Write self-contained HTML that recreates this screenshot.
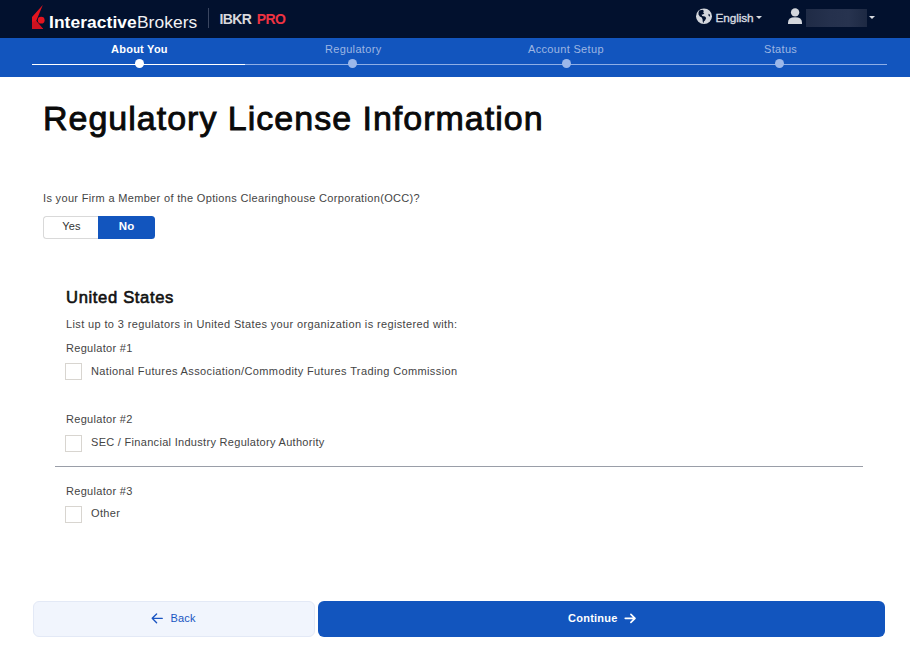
<!DOCTYPE html>
<html><head><meta charset="utf-8">
<style>
*{box-sizing:border-box;margin:0;padding:0}
html,body{width:910px;height:658px;overflow:hidden;background:#fff;font-family:"Liberation Sans",sans-serif;color:#333}
.abs{position:absolute;white-space:nowrap}
#hdr{position:absolute;left:0;top:0;width:910px;height:38px;background:#02112e}
#prog{position:absolute;left:0;top:38px;width:910px;height:39px;background:#1255be}
.t11{font-size:11px;letter-spacing:0.33px;color:#444}
.cb{position:absolute;width:17px;height:17px;border:1px solid #d8d5d0;background:#fff}
</style></head>
<body>
<div id="hdr">
  <svg class="abs" style="left:0;top:0" width="60" height="38" viewBox="0 0 60 38">
    <path d="M42.8 5 L32 17 L32 29 L43.2 29 L36.2 21 Z" fill="#e3141f"/>
    <path d="M32 22 L32 29 L43.2 29 L36.2 21 Z" fill="#cc1220"/>
    <circle cx="41.2" cy="20.2" r="3.4" fill="#e3141f"/>
  </svg>
  <div class="abs" style="left:49px;top:12px;font-size:17.4px;color:#fff;line-height:20px;letter-spacing:0.08px"><b>Interactive</b><span style="color:#f2f2f4">Brokers</span></div>
  <div class="abs" style="left:208px;top:8px;width:1px;height:20px;background:#3a4660"></div>
  <div class="abs" style="left:219.5px;top:11px;font-size:14px;line-height:16px;font-weight:bold;color:#d8d8dc;letter-spacing:-0.6px">IBKR<span style="color:#ee3342;margin-left:5.5px">PRO</span></div>
  <svg class="abs" style="left:692px;top:5px" width="24" height="24" viewBox="0 0 24 24">
    <ellipse cx="12" cy="11.25" rx="8" ry="7.8" fill="#d3d6dc"/>
    <path d="M7.2 5.6 L10.5 4.8 L12 6 L11 7.3 L12.3 8.3 L11 9.6 L9.6 9.4 L10.2 11 L13 11.6 L14.2 13 L13 15.5 L11.8 16.6 L11.5 18.2 L10.8 17 L10.5 14 L9.5 12.3 L7.8 11.5 L6.5 9.5 L6.5 7.5 Z" fill="#02112e"/>
    <path d="M16.4 8.8 L17.6 9.2 L18 10.8 L17.3 11.8 L16.6 10.6 Z" fill="#02112e"/>
  </svg>
  <div class="abs" style="left:715.5px;top:10.5px;font-size:11.8px;line-height:14px;color:#d8dbe0;font-weight:normal;letter-spacing:-0.1px;-webkit-text-stroke:0.35px #d8dbe0">English</div>
  <div class="abs" style="left:756px;top:16px;width:0;height:0;border-left:3px solid transparent;border-right:3px solid transparent;border-top:3px solid #d8dbe0"></div>
  <svg class="abs" style="left:782px;top:4px" width="24" height="24" viewBox="0 0 24 24">
    <circle cx="13.1" cy="8.4" r="4.2" fill="#d3d6dc"/>
    <path d="M6 20 L6 18.5 Q6 13.2 13 13.2 Q20 13.2 20 18.5 L20 20 Z" fill="#d3d6dc"/>
  </svg>
  <div class="abs" style="left:806px;top:9px;width:61px;height:18px;background:linear-gradient(90deg,#1f2b46,#25314d 40%,#27334f 70%,#1d2943)"></div>
  <div class="abs" style="left:868.8px;top:15.6px;width:0;height:0;border-left:3px solid transparent;border-right:3px solid transparent;border-top:3px solid #d8dbe0"></div>
</div>
<div id="prog">
  <div class="abs" style="left:32px;top:26px;width:855px;height:1px;background:#8eaee6"></div>
  <div class="abs" style="left:32px;top:26px;width:213px;height:1px;background:#fff"></div>
  <div class="abs" style="left:134.5px;top:21.2px;width:9px;height:9px;border-radius:50%;background:#fff"></div>
  <div class="abs" style="left:347.5px;top:21.2px;width:9px;height:9px;border-radius:50%;background:#9cb8ea"></div>
  <div class="abs" style="left:561.5px;top:21.2px;width:9px;height:9px;border-radius:50%;background:#9cb8ea"></div>
  <div class="abs" style="left:774.5px;top:21.2px;width:9px;height:9px;border-radius:50%;background:#9cb8ea"></div>
  <div class="abs" style="left:111px;top:4px;font-size:11px;line-height:14px;font-weight:bold;color:#fff;letter-spacing:0.25px">About You</div>
  <div class="abs" style="left:325px;top:4px;font-size:11px;line-height:14px;color:#9db6e3;letter-spacing:0.33px">Regulatory</div>
  <div class="abs" style="left:528px;top:4px;font-size:11px;line-height:14px;color:#9db6e3;letter-spacing:0.33px">Account Setup</div>
  <div class="abs" style="left:764px;top:4px;font-size:11px;line-height:14px;color:#9db6e3;letter-spacing:0.33px">Status</div>
</div>

<div class="abs" style="left:43px;top:98.5px;font-size:34px;line-height:38px;font-weight:normal;color:#0a0a0a;letter-spacing:1px;-webkit-text-stroke:0.9px #0a0a0a">Regulatory License Information</div>

<div class="abs t11" style="left:43px;top:191px;line-height:14px">Is your Firm a Member of the Options Clearinghouse Corporation(OCC)?</div>
<div class="abs" style="left:43px;top:216px;width:56px;height:23px;border:1px solid #d9d9d9;border-right:none;border-radius:3.5px 0 0 3.5px;font-size:11px;line-height:19px;text-align:center;color:#333;letter-spacing:0.2px">Yes</div>
<div class="abs" style="left:98px;top:216px;width:57px;height:23px;background:#1255be;border-radius:0 3.5px 3.5px 0;font-size:11.5px;line-height:21px;text-align:center;color:#fff;font-weight:bold">No</div>

<div class="abs" style="left:66px;top:288px;font-size:16.6px;line-height:20px;font-weight:normal;color:#111;letter-spacing:0.65px;-webkit-text-stroke:0.6px #111">United States</div>
<div class="abs t11" style="left:66px;top:317px;line-height:14px;letter-spacing:0.37px">List up to 3 regulators in United States your organization is registered with:</div>

<div class="abs t11" style="left:66px;top:341px;line-height:14px;letter-spacing:0.3px">Regulator #1</div>
<div class="cb" style="left:65px;top:363px"></div>
<div class="abs t11" style="left:91px;top:364px;line-height:14px;letter-spacing:0.38px">National Futures Association/Commodity Futures Trading Commission</div>

<div class="abs t11" style="left:66px;top:412px;line-height:14px;letter-spacing:0.3px">Regulator #2</div>
<div class="cb" style="left:65px;top:434.5px"></div>
<div class="abs t11" style="left:91px;top:435px;line-height:14px;letter-spacing:0.3px">SEC / Financial Industry Regulatory Authority</div>

<div class="abs" style="left:55px;top:466px;width:808px;height:1px;background:#9a9ea8"></div>

<div class="abs t11" style="left:66px;top:484px;line-height:14px;letter-spacing:0.3px">Regulator #3</div>
<div class="cb" style="left:65px;top:505.8px"></div>
<div class="abs t11" style="left:91px;top:506px;line-height:14px">Other</div>

<div class="abs" style="left:33px;top:601px;width:282px;height:36px;border:1px solid #e3e9f6;background:#f1f5fd;border-radius:6px"></div>
<div class="abs" style="left:318px;top:601px;width:567px;height:36px;background:#1255be;border-radius:6px"></div>
<svg class="abs" style="left:140px;top:605px" width="30" height="27" viewBox="0 0 30 27"><path d="M22.3 13.3 H12.4 M16.6 8.9 L12.2 13.3 L16.6 17.7" fill="none" stroke="#1a55c2" stroke-width="1.35" stroke-linecap="round" stroke-linejoin="round"/></svg>
<div class="abs" style="left:170.5px;top:610.5px;font-size:11px;line-height:14px;color:#1a55c2;letter-spacing:0.2px">Back</div>
<div class="abs" style="left:568px;top:610.5px;font-size:11px;line-height:14px;color:#fff;font-weight:bold;letter-spacing:0.25px">Continue</div>
<svg class="abs" style="left:620px;top:605px" width="20" height="27" viewBox="0 0 20 27"><path d="M5.2 13.3 H14.8 M10.9 9.3 L15 13.3 L10.9 17.3" fill="none" stroke="#fff" stroke-width="1.65" stroke-linecap="round" stroke-linejoin="round"/></svg>
</body></html>
